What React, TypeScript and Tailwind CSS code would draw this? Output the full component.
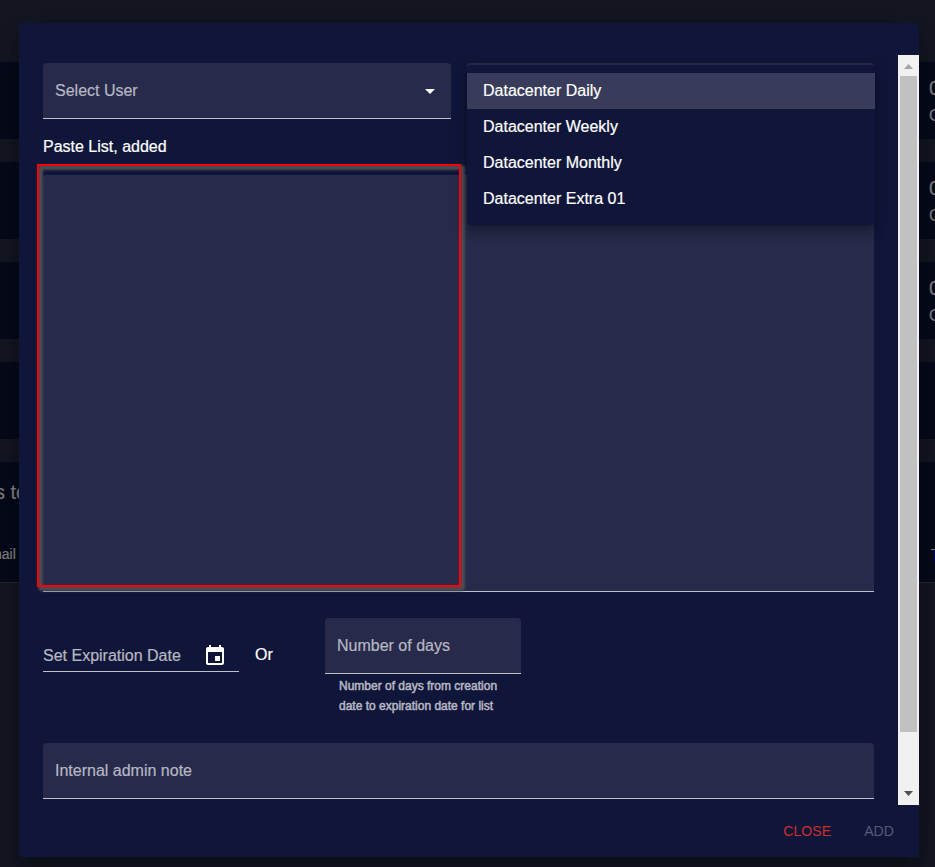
import { clsx } from "clsx";

const options = ["Datacenter Daily", "Datacenter Weekly", "Datacenter Monthly", "Datacenter Extra 01"];

function Backdrop() {
  return (
    <div className="flex h-full flex-col gap-[23px] overflow-hidden bg-[#141722] pt-[62px] text-[#858585]">
      {[0, 1, 2, 3].map((row) => (
        <div key={row} className="flex h-[77px] shrink-0 justify-end overflow-hidden bg-[#070a1b]">
          {row < 3 && (
            <div className="w-[6px] shrink-0 whitespace-nowrap pt-[12px]">
              <div className="text-[20px] leading-7">0</div>
              <div className="mt-[2px] text-[16px] leading-6">C</div>
            </div>
          )}
        </div>
      ))}
      <div className="flex h-[121px] shrink-0 justify-between overflow-hidden border-b border-[#292929] bg-[#070a1b]">
        <div className="flex w-[30px] shrink-0 flex-col pt-4">
          <span className="-ml-[5px] whitespace-nowrap text-[20px] leading-7">s to</span>
          <span className="mt-[38px] -ml-[6px] text-[14px] leading-5">nail</span>
        </div>
        <div className="mt-[87px] h-px w-1 bg-[#85858f]">
          <div className="ml-[3px] h-[11px] w-px translate-y-px bg-[#000080]" />
        </div>
      </div>
    </div>
  );
}

function Field({ label, className, caret = false }: { label: string; className?: string; caret?: boolean }) {
  return (
    <div
      className={clsx(
        "flex h-14 items-center justify-between rounded-t border-b border-[#bfc0cb] bg-[#272a4a] px-3 text-[16px] text-[#b7b8c3]",
        className,
      )}
    >
      <span>{label}</span>
      {caret && (
        <svg width="24" height="24" viewBox="0 0 24 24" fill="#fff" className="-mr-[3px]">
          <path d="M7 10l5 5 5-5z" />
        </svg>
      )}
    </div>
  );
}

function Scrollbar() {
  return (
    <div className="flex h-[750px] w-[21px] shrink-0 flex-col items-center bg-[#f1f1f1]">
      <div className="flex h-[21px] items-start pt-[9px]">
        <svg width="9" height="5" viewBox="0 0 9 5" fill="#a3a3a3">
          <path d="M0 5L4.500 0L9 5z" />
        </svg>
      </div>
      <div className="h-[656px] w-[17px] bg-[#c1c1c1]" />
      <div className="mt-auto flex h-[21px] items-start pt-[7px]">
        <svg width="9" height="5" viewBox="0 0 9 5" fill="#505050">
          <path d="M0 0L4.500 5L9 0z" />
        </svg>
      </div>
    </div>
  );
}

function Menu() {
  return (
    <ul className="absolute left-[448px] top-[42px] h-[160px] w-[408px] rounded bg-[#101639] pt-2 text-[16px] text-white shadow-[0_5px_5px_-3px_rgba(0,0,0,0.2),0_8px_10px_1px_rgba(0,0,0,0.14),0_3px_14px_2px_rgba(0,0,0,0.12)]">
      {options.map((option, index) => (
        <li key={option} className={clsx("h-9 px-4 leading-[35px]", index === 0 && "bg-[#383b59]")}>
          {option}
        </li>
      ))}
    </ul>
  );
}

function Highlight() {
  return (
    <div className="absolute left-[18px] top-[141px] h-[423px] w-[424px]">
      <div className="absolute left-[1px] top-[1px] h-[426px] w-[427px] rounded-[4px] border-[5px] border-[#4b4c54] blur-[0.8px]" />
      <div className="absolute inset-0 border-2 border-[#ff0000]" />
    </div>
  );
}

function CalendarIcon() {
  return (
    <svg width="24" height="24" viewBox="0 0 24 24" fill="#fff" className="mt-px">
      <path d="M17 12h-5v5h5v-5zM16 1v2H8V1H6v2H5c-1.110 0-1.990.9-1.990 2L3 19c0 1.100.89 2 2 2h14c1.100 0 2-.9 2-2V5c0-1.100-.9-2-2-2h-1V1h-2zm3 18H5V8h14v11z" />
    </svg>
  );
}

export default function App() {
  return (
    <div className="relative h-[867px] w-[935px] overflow-hidden font-['Liberation_Sans',Arial,sans-serif] [-webkit-text-stroke:0.2px]">
      <Backdrop />
      <div className="absolute left-[19px] top-[23px] h-[834px] w-[900px] rounded bg-[#101639] pt-8 shadow-[0_11px_15px_-7px_rgba(0,0,0,0.2),0_24px_38px_3px_rgba(0,0,0,0.14),0_9px_46px_8px_rgba(0,0,0,0.12)]">
        <div className="flex h-[750px] justify-between">
          <div className="w-[855px] pl-6 pt-2">
            <div className="flex gap-4">
              <Field label="Select User" className="w-[408px]" caret />
              <div className="h-14 w-[407px] rounded-t border-b border-[#bfc0cb] bg-[#272a4a]" />
            </div>
            <div className="mt-4 h-6 text-[16px] leading-6 text-white">Paste List, added</div>
            <div className="mt-4 h-[417px] rounded-t border-b border-[#bfc0cb] bg-[#272a4a]" />
            <div className="mt-[26px] flex h-[125px] items-start">
              <div className="mt-[22px] flex h-8 w-[196px] items-center justify-between border-b border-[#bfc0cb] pr-3 text-[16px] text-[#b7b8c3]">
                <span className="whitespace-nowrap">Set Expiration Date</span>
                <CalendarIcon />
              </div>
              <div className="ml-4 mt-[25px] w-[70px] text-[16px] leading-6 text-white">Or</div>
              <div className="w-[196px]">
                <Field label="Number of days" />
                <p className="ml-[14px] mt-[2px] whitespace-nowrap text-[12px] leading-5 text-[#b7b8c3] [-webkit-text-stroke:0.5px]">
                  Number of days from creation
                  <br />
                  date to expiration date for list
                </p>
              </div>
            </div>
            <Field label="Internal admin note" />
          </div>
          <Scrollbar />
        </div>
        <div className="flex h-[52px] items-center justify-end gap-[33px] pr-[25px] text-[14px] tracking-[0.1px] [-webkit-text-stroke:0px]">
          <span className="text-[#c9302c]">CLOSE</span>
          <span className="text-[#575b74]">ADD</span>
        </div>
        <Highlight />
        <Menu />
      </div>
    </div>
  );
}
